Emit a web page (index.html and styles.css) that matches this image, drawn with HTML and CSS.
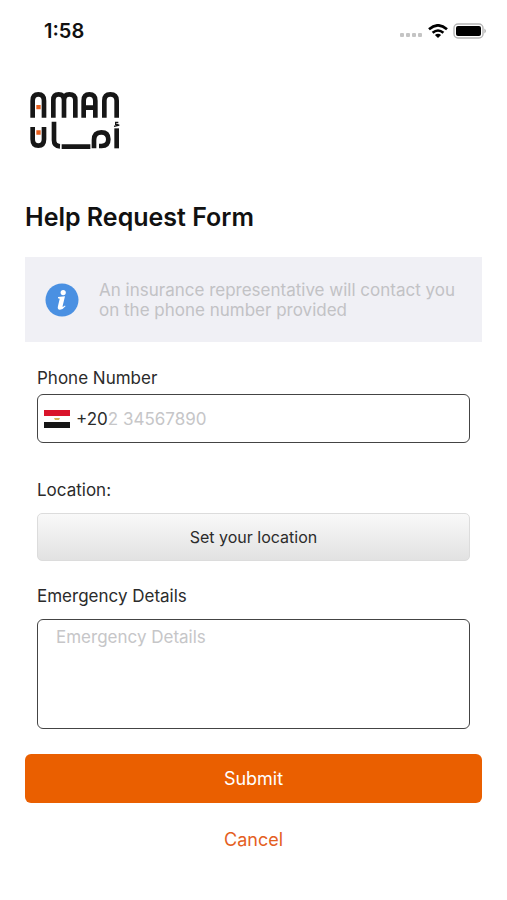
FILE: index.html
```html
<!DOCTYPE html>
<html lang="en">
<head>
<meta charset="utf-8">
<meta name="viewport" content="width=device-width, initial-scale=1">
<title>Help Request Form</title>
<link rel="stylesheet" href="styles.css">
</head>
<body>
<header class="status">
  <span class="time">1:58</span>
  <span class="indicators">
    <svg width="24" height="14" viewBox="0 0 24 14" fill="#c4c4c4" aria-hidden="true"><rect x="1" y="9" width="4" height="4" rx="1"/><rect x="7" y="9" width="4" height="4" rx="1"/><rect x="13" y="9" width="4" height="4" rx="1"/><rect x="19" y="9" width="4" height="4" rx="1"/></svg>
    <svg width="20" height="14" viewBox="0 0 20 14" fill="none" stroke="#000" stroke-width="2.6" aria-hidden="true"><path d="M1 5.2Q10-2.6 19 5.2M4.600 8.800Q10 4.200 15.400 8.800"/><path d="M10 14L6.900 10.900Q10 8.600 13.100 10.900Z" fill="#000" stroke="none"/></svg>
    <svg width="34" height="16" viewBox="0 0 34 16" aria-hidden="true"><rect x="1" y="1" width="29" height="14" rx="4" fill="#fff" stroke="#b5b5b5" stroke-width="1.4"/><rect x="3" y="3" width="25" height="10" rx="2"/><path d="M31.500 5.500Q34 8 31.500 10.500Z" fill="#999"/></svg>
  </span>
</header>
<main class="page">
  <svg class="logo" width="92" height="58" viewBox="26 35 276 174" fill="none" stroke="#161616" stroke-width="14" role="img" aria-label="Aman">
    <path d="M37 115V64Q37 45 54 45Q71 45 71 64V115"/>
    <path d="M99 115V62Q99 45 115 45Q131 45 131 62V115M131 62Q131 45 147 45Q165 45 165 62V115"/>
    <path d="M190 115V64Q190 45 207 45Q225 45 225 64V115M190 85H225"/>
    <path d="M252 115V64Q252 45 270 45Q289 45 289 64V115"/>
    <path d="M37 143V180Q37 199 54 199Q71 199 71 180V143"/>
    <path d="M101 127V183Q101 200 119 201M124 202H210"/>
    <path d="M221 207V182Q221 159 243 159Q264 159 264 180Q264 200 244 200H236"/>
    <path d="M289 147V207"/>
    <path d="M294 129H286V135H294M281 141L297 137" stroke-width="4"/>
    <path d="M48 77H61V90H48ZM48 153H61V166H48Z" fill="#e95f1c" stroke="none"/>
  </svg>
  <h1>Help Request Form</h1>
  <div class="notice">
    <svg width="34" height="34" viewBox="0 0 34 34" aria-hidden="true"><circle cx="17" cy="17" r="16.500" fill="#4a90e2"/><circle cx="18.200" cy="9.600" r="2.600" fill="#fff"/><path d="M13 14L20 13.300L17.500 23.500Q17.600 24.500 20 22.500L20.500 23.300Q17.500 27 14.700 26.800Q12.200 26.300 12.900 23.500L14.700 15.800L13 15.300Z" fill="#fff"/></svg>
    <p>An insurance representative will contact you on the phone number provided</p>
  </div>
  <form>
    <div class="fields">
      <div class="field field-phone">
        <label for="phone">Phone Number</label>
        <div class="phone">
          <svg width="26" height="18" viewBox="0 0 26 18" role="img" aria-label="Egypt"><path fill="#fff" d="M0 0H26V18H0Z"/><path fill="#d9142b" d="M0 0H26V6H0Z"/><path fill="#161616" d="M0 12H26V18H0Z"/><path fill="#d5b45c" d="M10 8H16L15 10H11Z"/></svg>
          <span class="code">+20</span>
          <input id="phone" type="tel" placeholder="2 34567890">
        </div>
      </div>
      <div class="field">
        <label for="location">Location:</label>
        <button class="location" id="location" type="button">Set your location</button>
      </div>
      <div class="field">
        <label for="details">Emergency Details</label>
        <textarea id="details" placeholder="Emergency Details"></textarea>
      </div>
    </div>
    <button class="submit" type="submit">Submit</button>
    <button class="cancel" type="button">Cancel</button>
  </form>
</main>
</body>
</html>
```
FILE: styles.css
```css
* {
  box-sizing: border-box;
}

body {
  margin: 0;
  background: #fff;
  color: #2b2b2b;
  font: 17px/20px Inter, sans-serif;
}

button,
input,
textarea {
  font: inherit;
  color: inherit;
}

.status {
  display: flex;
  justify-content: space-between;
  align-items: center;
  padding: 19px 20px 0 44px;
}

.time {
  color: #111;
  font-size: 20px;
  line-height: 24px;
  font-weight: 600;
}

.indicators {
  display: flex;
  align-items: center;
  gap: 5px;
}

.page {
  padding: 48px 25px 32px;
}

.logo {
  display: block;
  margin-left: 4px;
}

h1 {
  margin: 52px 0 24px;
  color: #111;
  font-size: 25px;
  line-height: 32px;
  font-weight: 600;
}

.notice {
  display: flex;
  align-items: center;
  gap: 20px;
  min-height: 85px;
  padding: 16px 20px;
  background: #f0f0f5;
  color: #c2c2c5;
}

.notice svg {
  flex: none;
}

.notice p {
  margin: 0;
}

.fields {
  display: flex;
  flex-direction: column;
  gap: 25px;
  padding: 26px 12px 25px;
}

.field {
  display: flex;
  flex-direction: column;
  gap: 13px;
}

.field-phone {
  gap: 6px;
  margin-bottom: 12px;
}

.phone {
  display: flex;
  align-items: center;
  height: 49px;
  padding: 0 6px;
  border: 1px solid #444;
  border-radius: 6px;
}

.code {
  margin-left: 6px;
}

.phone input {
  flex: 1;
  min-width: 0;
  padding: 0;
  border: 0;
  background: none;
}

::placeholder {
  color: #c6c6c8;
  opacity: 1;
}

.location {
  height: 48px;
  border: 1px solid #dcdcdc;
  border-radius: 5px;
  background: linear-gradient(#f9f9f9, #e2e2e2);
  font-size: 16px;
}

textarea {
  display: block;
  height: 110px;
  padding: 7px 18px;
  border: 1px solid #444;
  border-radius: 6px;
  background: none;
  resize: none;
}

.submit,
.cancel {
  display: block;
  width: 100%;
  border: 0;
  font-size: 18px;
}

.submit {
  height: 49px;
  border-radius: 6px;
  background: #ea5f00;
  color: #fff;
}

.cancel {
  margin-top: 23px;
  padding: 4px;
  background: none;
  color: #e4601f;
}
```
